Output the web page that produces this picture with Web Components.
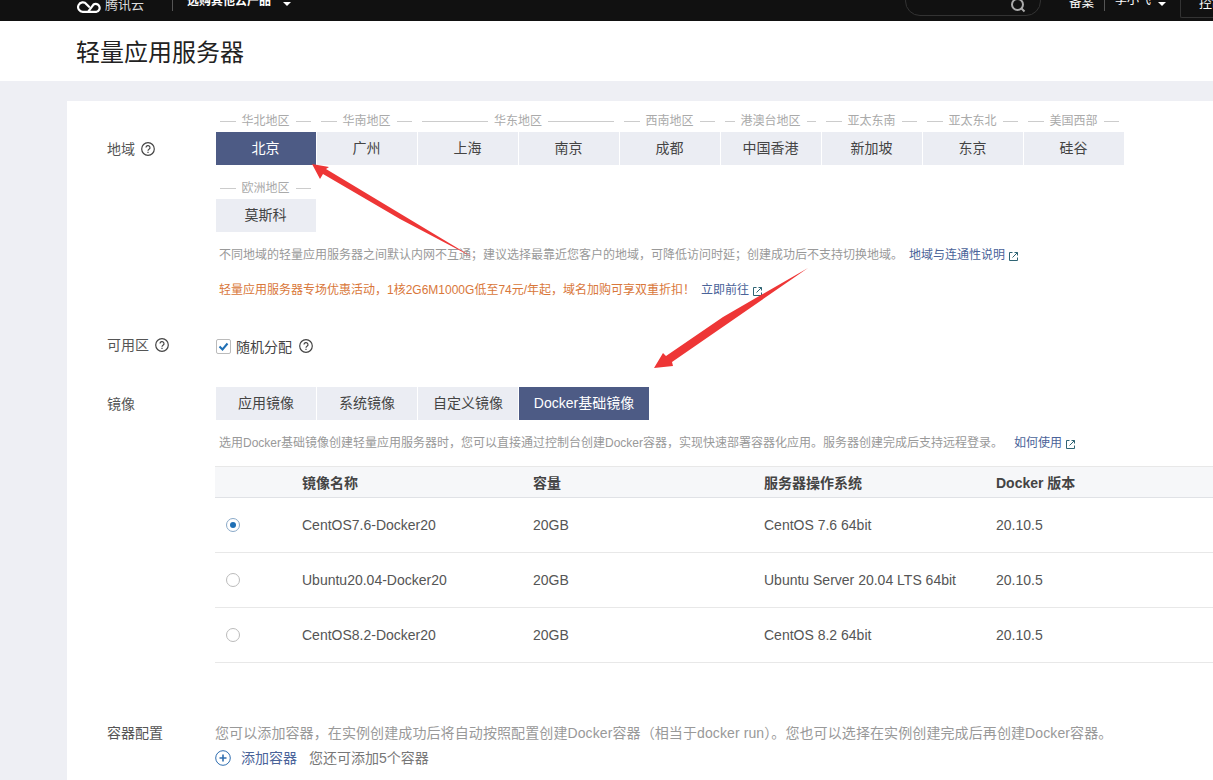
<!DOCTYPE html>
<html>
<head>
<meta charset="utf-8">
<style>
    html, body { margin: 0; height: 100%; overflow: hidden; }
    body {
        background: #eeeff4;
        color: #444;
        font-family: "Liberation Sans", "Noto Sans CJK SC", sans-serif;
        font-size: 12px;
    }
</style>
</head>
<body>
<top-bar></top-bar>
<title-bar>轻量应用服务器</title-bar>
<config-card>
    <form-row label="地域" help>
        <region-picker></region-picker>
        <hint-line top="14">不同地域的轻量应用服务器之间默认内网不互通；建议选择最靠近您客户的地域，可降低访问时延；创建成功后不支持切换地域。<ext-link gap="6">地域与连通性说明</ext-link></hint-line>
        <hint-line top="17" orange>轻量应用服务器专场优惠活动，1核2G6M1000G低至74元/年起，域名加购可享双重折扣！<ext-link gap="6">立即前往</ext-link></hint-line>
    </form-row>
    <form-row label="可用区" help top="37" labeltop="0">
        <random-check></random-check>
    </form-row>
    <form-row label="镜像" top="32" labeltop="8">
        <tab-group><span>应用镜像</span><span>系统镜像</span><span>自定义镜像</span><span>Docker基础镜像</span></tab-group>
        <hint-line top="14">选用Docker基础镜像创建轻量应用服务器时，您可以直接通过控制台创建Docker容器，实现快速部署容器化应用。服务器创建完成后支持远程登录。<ext-link gap="11">如何使用</ext-link></hint-line>
        <image-table></image-table>
    </form-row>
    <form-row label="容器配置" top="61" labeltop="0">
        <container-config></container-config>
    </form-row>
    <red-arrows></red-arrows>
</config-card>

<script>
const helpIcon = `<svg width="14" height="14" viewBox="0 0 14 14" fill="none" stroke="#444" stroke-width="1.2"><circle cx="7" cy="7" r="6.3"/><path d="M5 5.6a2 2 0 1 1 3 1.7c-.7.4-1 .8-1 1.5"/><path d="M7 9.8v1.2"/></svg>`;

class TopBar extends HTMLElement {
    constructor() {
        super();
        this.attachShadow({mode: 'open'}).innerHTML = `
        <style>
            :host { display: flex; align-items: flex-end; height: 21px; background: #111; overflow: hidden; color: #fff; font-size: 12px; padding-left: 77px; }
            .logo { display: flex; align-items: flex-end; gap: 3px; margin-bottom: 8px; }
            .logo span { font-size: 13px; line-height: 13px; color: #ddd; margin-bottom: 2px; }
            .sep { width: 1px; height: 12px; background: #555; margin: 0 14px 10px 28px; }
            .buy { font-weight: bold; line-height: 14px; margin-bottom: 13px; }
            .caret { width: 0; height: 0; border: 4px solid transparent; border-top: 4px solid #fff; border-bottom: 0; }
            .caret.a { margin: 0 0 15px 12px; }
            .spacer { flex: 1; }
            .search { width: 136px; height: 30px; border: 1px solid #333; border-radius: 15px; margin-bottom: 5px; display: flex; align-items: flex-end; justify-content: flex-end; padding-right: 14px; box-sizing: border-box; }
            .search svg { margin-bottom: 2px; }
            .beian { line-height: 14px; margin: 0 0 11px 28px; font-size: 12.5px; }
            .sep2 { width: 1px; height: 11px; background: #555; margin: 0 10px 10px; }
            .user { line-height: 14px; margin-bottom: 14px; }
            .caret.b { margin: 0 0 15px 7px; }
            .ctrl { flex: none; width: 33px; height: 30px; border: 1px solid #333; border-right: 0; border-radius: 2px 0 0 2px; margin: 0 0 3px 14px; padding: 0 0 7px 18px; box-sizing: border-box; display: flex; align-items: flex-end; font-size: 13px; line-height: 14px; white-space: nowrap; overflow: hidden; }
        </style>
        <div class="logo">
            <svg width="25" height="13" viewBox="0 0 25 13" fill="none" stroke="#fff" stroke-width="2.2" stroke-linecap="round"><path d="M11 11.8 16.5 4.5A4 4 0 1 1 19.5 11.8H6A4.7 4.7 0 1 1 9.5 4.2L12 6.8"/></svg>
            <span>腾讯云</span>
        </div>
        <div class="sep"></div>
        <div class="buy">选购其他云产品</div>
        <div class="caret a"></div>
        <div class="spacer"></div>
        <div class="search">
            <svg width="16" height="16" viewBox="0 0 16 16" fill="none" stroke="#aaa" stroke-width="2"><circle cx="7.5" cy="7.5" r="5.5"/><path d="m11.5 11.5 3 3"/></svg>
        </div>
        <div class="beian">备案</div>
        <div class="sep2"></div>
        <div class="user">李小飞</div>
        <div class="caret b"></div>
        <div class="ctrl">控制台</div>`;
    }
}

class TitleBar extends HTMLElement {
    constructor() {
        super();
        this.attachShadow({mode: 'open'}).innerHTML = `
        <style>
            :host { display: flex; align-items: center; height: 60px; box-sizing: border-box; background: #fff; padding: 0 0 2px 76px; font-size: 24px; color: #222; }
        </style>
        <slot></slot>`;
    }
}

class ConfigCard extends HTMLElement {
    constructor() {
        super();
        this.attachShadow({mode: 'open'}).innerHTML = `
        <style>
            :host { display: block; position: relative; background: #fff; margin: 20px 0 0 67px; padding: 12px 0 0 40px; height: 700px; box-sizing: border-box; }
        </style>
        <slot></slot>`;
    }
}

class FormRow extends HTMLElement {
    constructor() {
        super();
        const top = this.getAttribute('top') || 0;
        const labelTop = this.getAttribute('labeltop') || 27;
        this.attachShadow({mode: 'open'}).innerHTML = `
        <style>
            :host { display: flex; margin-top: ${top}px; }
            .label { width: 108px; flex: none; padding-top: ${labelTop}px; font-size: 14px; line-height: 18px; color: #555; display: flex; align-items: flex-start; gap: 6px; box-sizing: border-box; }
            .label svg { margin-top: 2px; }
            .body { flex: 1; min-width: 0; }
        </style>
        <div class="label"><span>${this.getAttribute('label')}</span>${this.hasAttribute('help') ? helpIcon : ''}</div>
        <div class="body"><slot></slot></div>`;
    }
}

class RegionPicker extends HTMLElement {
    constructor() {
        super();
        const rows = [
            [['华北地区', ['北京']], ['华南地区', ['广州']], ['华东地区', ['上海', '南京']], ['西南地区', ['成都']], ['港澳台地区', ['中国香港']], ['亚太东南', ['新加坡']], ['亚太东北', ['东京']], ['美国西部', ['硅谷']]],
            [['欧洲地区', ['莫斯科']]]
        ];
        const group = ([name, cities]) => `
            <div class="group">
                <div class="name"><i></i><span>${name}</span><i></i></div>
                <div class="tabs">${cities.map(c => `<b class="${c === '北京' ? 'on' : ''}">${c}</b>`).join('')}</div>
            </div>`;
        this.attachShadow({mode: 'open'}).innerHTML = `
        <style>
            :host { display: block; padding-left: 1px; }
            .row { display: flex; gap: 1px; margin-bottom: 15px; }
            .row:last-child { margin-bottom: 0; }
            .group { display: flex; flex-direction: column; }
            .name { display: flex; align-items: center; gap: 6px; height: 19px; box-sizing: border-box; padding: 0 5px 2px 4px; color: #aaa; font-size: 12px; line-height: 15px; white-space: nowrap; }
            .name i { flex: 1; height: 1px; background: #ccc; }
            .tabs { display: flex; gap: 1px; }
            b { width: 100px; height: 33px; box-sizing: border-box; padding: 0 1px 3px 0; background: #ebedf3; color: #444; font-weight: normal; font-size: 14px; display: flex; align-items: center; justify-content: center; }
            b.on { background: #4d5b85; color: #fff; }
        </style>
        ${rows.map(r => `<div class="row">${r.map(group).join('')}</div>`).join('')}`;
    }
}

class HintLine extends HTMLElement {
    constructor() {
        super();
        const color = this.hasAttribute('orange') ? '#d9773a' : '#999';
        this.attachShadow({mode: 'open'}).innerHTML = `
        <style>
            :host { display: block; margin-top: ${this.getAttribute('top') || 0}px; padding-left: 4px; font-size: 12px; line-height: 18px; color: ${color}; white-space: nowrap; }
        </style>
        <slot></slot>`;
    }
}

class ExtLink extends HTMLElement {
    constructor() {
        super();
        this.attachShadow({mode: 'open'}).innerHTML = `
        <style>
            :host { display: inline-flex; align-items: center; gap: 4px; margin-left: ${this.getAttribute('gap') || 0}px; color: #4a6399; vertical-align: top; }
        </style>
        <slot></slot>
        <svg width="9" height="9" viewBox="0 0 9 9" fill="none" stroke="#2f6474" style="margin-top:2px"><path d="M3.5.5h-3v8h8v-3"/><path d="M3.5 5.5l5-5M5.5.5h3v3"/></svg>`;
    }
}

class RandomCheck extends HTMLElement {
    constructor() {
        super();
        this.attachShadow({mode: 'open'}).innerHTML = `
        <style>
            :host { display: flex; align-items: center; height: 18px; margin-top: 1px; padding-left: 1px; font-size: 14px; color: #444; }
            .box { width: 13px; height: 13px; border: 1px solid #bbb; border-radius: 2px; margin-right: 5px; display: flex; }
            .q { margin-left: 7px; display: flex; }
        </style>
        <div class="box"><svg width="13" height="13" viewBox="0 0 13 13" fill="none" stroke="#1f6fb5" stroke-width="2"><path d="m2.5 6.5 3 3 5-6"/></svg></div>
        <span>随机分配</span>
        <span class="q">${helpIcon}</span>`;
    }
}

class TabGroup extends HTMLElement {
    constructor() {
        super();
        this.attachShadow({mode: 'open'}).innerHTML = `
        <style>
            :host { display: flex; gap: 1px; padding-left: 1px; }
            ::slotted(span) { width: 100px; height: 33px; box-sizing: border-box; padding-bottom: 3px; background: #ebedf3; color: #444; font-size: 14px; display: flex; align-items: center; justify-content: center; }
            ::slotted(span:last-child) { background: #4d5b85; color: #fff; width: 130px; }
        </style>
        <slot></slot>`;
    }
}

class ImageTable extends HTMLElement {
    constructor() {
        super();
        const data = [
            ['CentOS7.6-Docker20', '20GB', 'CentOS 7.6 64bit', '20.10.5'],
            ['Ubuntu20.04-Docker20', '20GB', 'Ubuntu Server 20.04 LTS 64bit', '20.10.5'],
            ['CentOS8.2-Docker20', '20GB', 'CentOS 8.2 64bit', '20.10.5']
        ];
        this.attachShadow({mode: 'open'}).innerHTML = `
        <style>
            :host { display: block; margin-top: 14px; font-size: 14px; color: #555; }
            .row { display: grid; grid-template-columns: 87px 231px 231px 232px 1fr; align-items: center; height: 55px; box-sizing: border-box; border-bottom: 1px solid #e8e8e8; }
            .row.head { height: 32px; background: #f6f7f9; border-top: 1px solid #e8e8e8; border-bottom: 1px solid #e0e2e6; font-weight: bold; color: #444; }
            .radio { width: 12px; height: 12px; border: 1px solid #bbb; border-radius: 50%; margin-left: 11px; display: flex; align-items: center; justify-content: center; }
            .radio.on { border-color: #8aa9c8; }
            .radio.on::after { content: ""; width: 6px; height: 6px; border-radius: 50%; background: #1f6fb5; }
        </style>
        <div class="row head"><span></span><span>镜像名称</span><span>容量</span><span>服务器操作系统</span><span>Docker 版本</span></div>
        ${data.map((d, i) => `<div class="row"><span class="radio ${i === 0 ? 'on' : ''}"></span>${d.map(t => `<span>${t}</span>`).join('')}</div>`).join('')}`;
    }
}

class ContainerConfig extends HTMLElement {
    constructor() {
        super();
        this.attachShadow({mode: 'open'}).innerHTML = `
        <style>
            :host { display: block; font-size: 14px; line-height: 18px; color: #999; white-space: nowrap; }
            .note { letter-spacing: .1px; }
            .add { display: flex; align-items: center; margin-top: 7px; color: #777; }
            .add svg { margin-right: 10px; }
            .link { color: #4a6399; margin-right: 12px; }
        </style>
        <div class="note">您可以添加容器，在实例创建成功后将自动按照配置创建Docker容器（相当于docker run）。您也可以选择在实例创建完成后再创建Docker容器。</div>
        <div class="add">
            <svg width="16" height="16" viewBox="0 0 16 16" fill="none" stroke="#2f6eb0"><circle cx="8" cy="8" r="7.3"/><path d="M4.5 8h7M8 4.5v7" stroke-width="1.6"/></svg>
            <span class="link">添加容器</span><span>您还可添加5个容器</span>
        </div>`;
    }
}

// annotations drawn over the page, in page coordinates
class RedArrows extends HTMLElement {
    constructor() {
        super();
        this.attachShadow({mode: 'open'}).innerHTML = `
        <style>
            :host { position: absolute; left: -67px; top: -101px; width: 1213px; height: 780px; pointer-events: none; }
            svg { display: block; }
        </style>
        <svg width="1213" height="780" viewBox="0 0 1213 780" fill="#ee3636">
            <polygon points="312,164 329,167 326,169 474,258 400,219 323,174 320,179"/>
            <polygon points="808,268 723,317 666,356 663,353 654,368 673,366 672,362"/>
        </svg>`;
    }
}

customElements.define('top-bar', TopBar);
customElements.define('title-bar', TitleBar);
customElements.define('config-card', ConfigCard);
customElements.define('form-row', FormRow);
customElements.define('region-picker', RegionPicker);
customElements.define('hint-line', HintLine);
customElements.define('ext-link', ExtLink);
customElements.define('random-check', RandomCheck);
customElements.define('tab-group', TabGroup);
customElements.define('image-table', ImageTable);
customElements.define('container-config', ContainerConfig);
customElements.define('red-arrows', RedArrows);
</script>
</body>
</html>
